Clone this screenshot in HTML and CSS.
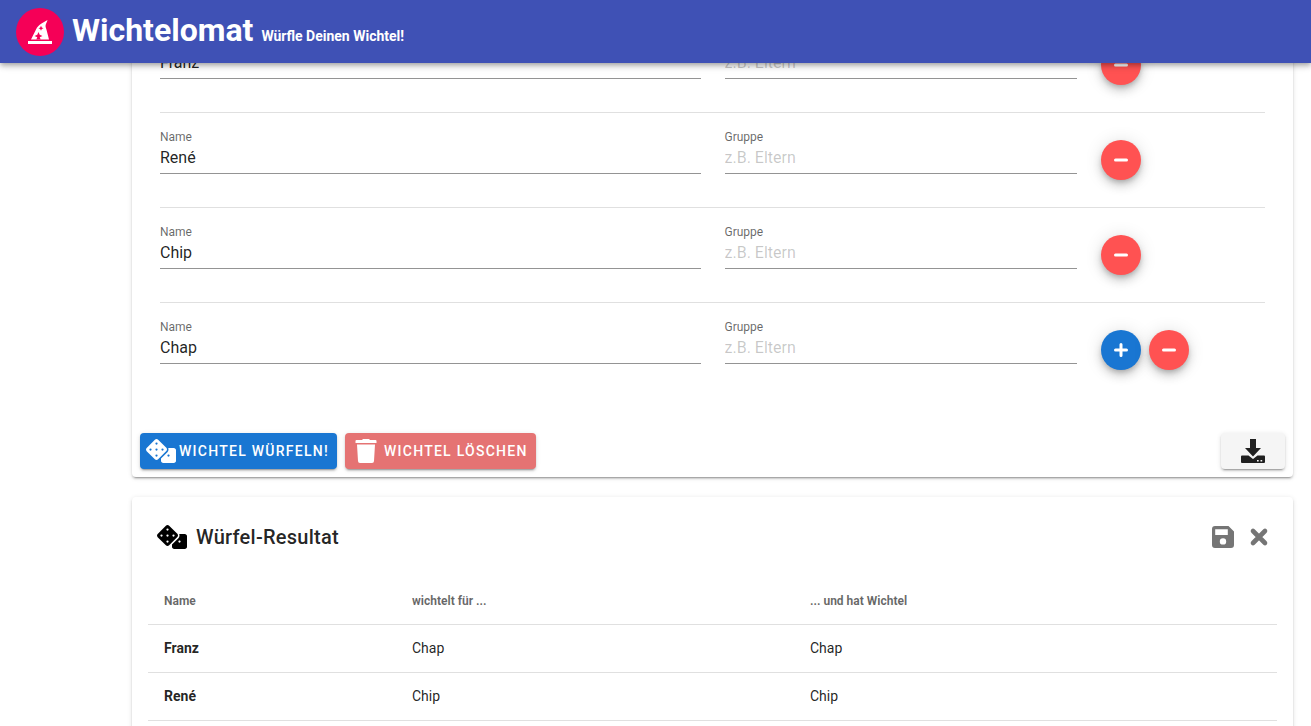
FILE: index.html
```html
<!DOCTYPE html>
<html lang="de">
<head>
<meta charset="utf-8">
<meta name="viewport" content="width=device-width, initial-scale=1">
<title>Wichtelomat</title>
<link rel="stylesheet" href="styles.css">
</head>
<body>
<svg class="sprite" aria-hidden="true">
  <symbol id="plus" viewBox="0 0 16 16"><path d="M8 2.500v11M2.500 8h11" fill="none" stroke="currentColor" stroke-width="3" stroke-linecap="round"/></symbol>
  <symbol id="minus" viewBox="0 0 16 16"><path d="M2.500 8h11" fill="none" stroke="currentColor" stroke-width="3" stroke-linecap="round"/></symbol>
  <symbol id="dice" viewBox="0 0 640 512"><path fill="currentColor" fill-rule="evenodd" d="M592 192H473.260c12.690 29.590 7.120 65.200-17 89.320L320 417.580V464c0 26.510 21.490 48 48 48h224c26.510 0 48-21.490 48-48V240c0-26.510-21.490-48-48-48zM480 376c-13.250 0-24-10.750-24-24 0-13.260 10.750-24 24-24s24 10.740 24 24c0 13.250-10.750 24-24 24zM433.630 189.210 258.790 14.370c-19.160-19.160-50.230-19.160-69.390 0L14.370 189.400c-19.160 19.160-19.160 50.230 0 69.390L189.210 433.630c19.160 19.160 50.230 19.160 69.390 0L433.630 258.600c19.160-19.160 19.160-50.230 0-69.390zM96 248a24 24 0 1 1 0-48 24 24 0 0 1 0 48zM224 376a24 24 0 1 1 0-48 24 24 0 0 1 0 48zM224 248a24 24 0 1 1 0-48 24 24 0 0 1 0 48zM224 120a24 24 0 1 1 0-48 24 24 0 0 1 0 48zM352 248a24 24 0 1 1 0-48 24 24 0 0 1 0 48z"/></symbol>
</svg>

<header class="topbar">
  <svg class="topbar__logo" viewBox="0 0 48 48" role="img" aria-label="Wichtelhut">
    <circle cx="24" cy="24" r="24" fill="#f50057"/>
    <path fill="#fff" d="M12 33h24v3H12zM15 31.500 20 21.500c1-2.500 3-4.500 5.500-6L31.500 12c-.4 2-1.900 4-2 6 0 1.200.6 2.400 1 3.700L33 31.500z"/>
    <path fill="#f50057" d="M25 17.800l.8 1.700 1.700.8-1.700.8-.8 1.700-.8-1.700-1.700-.8 1.700-.8zM22.500 24l1.200 2.800 2.800 1.200-2.800 1.200 1 2.300h-4.400l1-2.300-2.800-1.200 2.800-1.200z"/>
  </svg>
  <h1 class="topbar__title">Wichtelomat</h1>
  <p class="topbar__claim">Würfle Deinen Wichtel!</p>
</header>

<main class="page">
  <section class="card card--form">
    <form class="people">
      <div class="person">
        <div class="field field--name"><label for="n1">Name</label><input id="n1" value="Franz"></div>
        <div class="field field--group"><label for="g1">Gruppe</label><input id="g1" placeholder="z.B. Eltern"></div>
        <div class="person__actions"><button type="button" class="fab fab--remove" aria-label="Entfernen"><svg><use href="#minus"/></svg></button></div>
      </div>
      <div class="person">
        <div class="field field--name"><label for="n2">Name</label><input id="n2" value="René"></div>
        <div class="field field--group"><label for="g2">Gruppe</label><input id="g2" placeholder="z.B. Eltern"></div>
        <div class="person__actions"><button type="button" class="fab fab--remove" aria-label="Entfernen"><svg><use href="#minus"/></svg></button></div>
      </div>
      <div class="person">
        <div class="field field--name"><label for="n3">Name</label><input id="n3" value="Chip"></div>
        <div class="field field--group"><label for="g3">Gruppe</label><input id="g3" placeholder="z.B. Eltern"></div>
        <div class="person__actions"><button type="button" class="fab fab--remove" aria-label="Entfernen"><svg><use href="#minus"/></svg></button></div>
      </div>
      <div class="person">
        <div class="field field--name"><label for="n4">Name</label><input id="n4" value="Chap"></div>
        <div class="field field--group"><label for="g4">Gruppe</label><input id="g4" placeholder="z.B. Eltern"></div>
        <div class="person__actions">
          <button type="button" class="fab fab--add" aria-label="Hinzufügen"><svg><use href="#plus"/></svg></button>
          <button type="button" class="fab fab--remove" aria-label="Entfernen"><svg><use href="#minus"/></svg></button>
        </div>
      </div>
    </form>
    <div class="actions">
      <button type="button" class="btn btn--primary"><svg class="dice"><use href="#dice"/></svg>Wichtel würfeln!</button>
      <button type="button" class="btn btn--danger"><svg class="trash" viewBox="0 0 22 24"><path fill="currentColor" d="M1.500 1H7L8 0h6l1 1h5.500a1 1 0 0 1 1 1v2h-21V2a1 1 0 0 1 1-1zM2 5.500h18l-1 16.500a2 2 0 0 1-2 2H5a2 2 0 0 1-2-2z"/></svg>Wichtel löschen</button>
      <button type="button" class="btn btn--plain" aria-label="Herunterladen"><svg class="download" viewBox="0 0 24 24"><path fill="currentColor" fill-rule="evenodd" d="M9 0h6v9h5L12 17.500 4 9h5zM1 16.500h6.500l4.500 3.500 4.500-3.500H23a1 1 0 0 1 1 1V23a1 1 0 0 1-1 1H1a1 1 0 0 1-1-1v-5.500a1 1 0 0 1 1-1zM16 21v1.500h1.700V21zM19.500 21v1.500h1.700V21z"/></svg></button>
    </div>
  </section>

  <section class="card card--result">
    <div class="result__head">
      <svg class="dice dice--dark"><use href="#dice"/></svg>
      <h2>Würfel-Resultat</h2>
      <button type="button" class="icon-btn" aria-label="Speichern"><svg viewBox="0 0 22 22"><path fill="currentColor" fill-rule="evenodd" d="M3 0h13.500L22 5.500V19a3 3 0 0 1-3 3H3a3 3 0 0 1-3-3V3a3 3 0 0 1 3-3zM3.200 3.200V9h12.600V3.200zM11 12.200a3.200 3.200 0 1 0 0 6.400 3.200 3.200 0 0 0 0-6.400z"/></svg></button>
      <button type="button" class="icon-btn" aria-label="Schliessen"><svg viewBox="0 0 22 22"><path d="M5 5l12 12M17 5L5 17" fill="none" stroke="currentColor" stroke-width="4.600" stroke-linecap="round"/></svg></button>
    </div>
    <table class="result">
      <thead><tr><th class="col-name">Name</th><th class="col-for">wichtelt für ...</th><th>... und hat Wichtel</th></tr></thead>
      <tbody>
        <tr><td class="who">Franz</td><td>Chap</td><td>Chap</td></tr>
        <tr><td class="who">René</td><td>Chip</td><td>Chip</td></tr>
      </tbody>
    </table>
  </section>
</main>
</body>
</html>
```
FILE: styles.css
```css
*, *::before, *::after { box-sizing: border-box; }
body {
  margin: 0;
  background: #fff;
  color: rgba(0, 0, 0, .87);
  font-family: Roboto, "Liberation Sans", sans-serif;
  font-size: 16px;
}
h1, h2, p { margin: 0; }
button, input { font: inherit; color: inherit; border: 0; padding: 0; }
button { cursor: pointer; }
.sprite { display: none; }

.topbar {
  position: sticky;
  top: 0;
  z-index: 2;
  display: flex;
  align-items: center;
  height: 63px;
  padding: 0 16px;
  gap: 8px;
  background: #3f51b5;
  color: #fff;
  box-shadow: 0 2px 4px -1px rgba(0,0,0,.2), 0 4px 5px rgba(0,0,0,.14), 0 1px 10px rgba(0,0,0,.12);
}
.topbar__logo { width: 48px; height: 48px; flex: none; }
.topbar__title { font-size: 32px; font-weight: 700; line-height: 60px; padding-bottom: 3px; }
.topbar__claim { font-size: 14px; font-weight: 700; line-height: 20px; padding-top: 9px; }

.page { margin-top: -45px; padding: 0 18px 0 132px; }
.card {
  background: #fff;
  border-radius: 4px;
  box-shadow: 0 3px 1px -2px rgba(0,0,0,.2), 0 2px 2px rgba(0,0,0,.14), 0 1px 5px rgba(0,0,0,.12);
}
.people { padding: 0 28px; }
.person {
  display: grid;
  grid-template-columns: repeat(12, 1fr);
  column-gap: 24px;
  padding: 16px 0 33px;
  border-bottom: 1px solid #e0e0e0;
}
.person:last-child { border-bottom: 0; }
.field { display: flex; flex-direction: column; }
.field--name { grid-column: span 6; }
.field--group { grid-column: span 4; }
.field label { font-size: 12px; line-height: 16px; color: rgba(0,0,0,.6); }
.field input {
  width: 100%;
  height: 29px;
  padding-bottom: 4px;
  background: none;
  border-bottom: 1px solid #949494;
  outline: 0;
}
.field input::placeholder { color: rgba(0,0,0,.22); opacity: 1; }
.person__actions { grid-column: span 2; display: flex; gap: 8px; align-items: center; padding-top: 17px; height: 45px; }
.fab {
  display: grid;
  place-items: center;
  flex: none;
  width: 40px;
  height: 40px;
  border-radius: 50%;
  color: #fff;
  box-shadow: 0 3px 5px -1px rgba(0,0,0,.2), 0 6px 10px rgba(0,0,0,.14), 0 1px 18px rgba(0,0,0,.12);
}
.fab svg { width: 16px; height: 16px; }
.fab--add { background: #1976d2; }
.fab--remove { background: #ff5252; }

.actions { display: flex; gap: 8px; padding: 36px 8px 8px; }
.btn {
  display: flex;
  align-items: center;
  justify-content: center;
  height: 36px;
  border-radius: 4px;
  font-size: 14px;
  font-weight: 500;
  letter-spacing: .09em;
  text-transform: uppercase;
  box-shadow: 0 3px 1px -2px rgba(0,0,0,.2), 0 2px 2px rgba(0,0,0,.14), 0 1px 5px rgba(0,0,0,.12);
}
.btn--primary { padding: 0 8px 0 6px; gap: 3px; background: #1976d2; color: #fff; }
.btn--danger { padding: 0 8px 0 10px; gap: 7px; background: #e57373; color: #fff; }
.btn--plain { width: 64px; margin-left: auto; background: #f5f5f5; }
.dice { width: 30px; height: 24px; flex: none; }
.dice--dark { color: #000; }
.trash { width: 22px; height: 24px; }
.download { width: 24px; height: 24px; }

.card--result { margin-top: 20px; padding: 16px; }
.result__head { display: flex; align-items: center; height: 48px; padding: 0 7px 0 9px; }
.result__head h2 { font-size: 20px; font-weight: 500; line-height: 32px; letter-spacing: .0125em; margin: 0 auto 0 9px; }
.icon-btn { display: grid; place-items: center; width: 22px; height: 36px; margin-left: 14px; background: none; color: #757575; }
.icon-btn svg { width: 22px; height: 22px; }
.result { width: 100%; margin-top: 16px; border-collapse: separate; border-spacing: 0; table-layout: fixed; font-size: 14px; }
.result th, .result td { height: 48px; padding: 0 16px; text-align: left; border-bottom: 1px solid #e0e0e0; }
.result td { padding-bottom: 2px; }
.result th { font-size: 12px; font-weight: 700; color: rgba(0,0,0,.6); }
.result .col-name { width: 248px; }
.result .col-for { width: 398px; }
.who { font-weight: 700; }
```
